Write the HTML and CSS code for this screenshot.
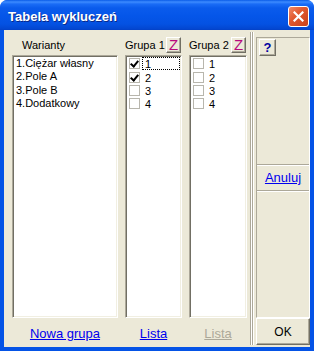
FILE: index.html
```html
<!DOCTYPE html>
<html lang="pl">
<head>
<meta charset="utf-8">
<title>Tabela wykluczeń</title>
<link rel="stylesheet" href="styles.css">
</head>
<body>
<div class="window">
  <div class="titlebar">
    <span class="title">Tabela wykluczeń</span>
    <span class="close">
      <svg width="11" height="11" viewBox="0 0 11 11"><path d="M1.5 1.5 L9.5 9.5 M9.5 1.5 L1.5 9.5" stroke="#fff" stroke-width="2.2" stroke-linecap="square"/></svg>
    </span>
  </div>
  <div class="client">
    <div class="main">
      <div class="col col-var">
        <div class="head head-var"><span class="label">Warianty</span></div>
        <ul class="list">
          <li>1.Ciężar własny</li>
          <li>2.Pole A</li>
          <li>3.Pole B</li>
          <li>4.Dodatkowy</li>
        </ul>
        <div class="foot"><a class="link" href="#">Nowa grupa</a></div>
      </div>
      <div class="col col-g1">
        <div class="head"><span class="label">Grupa 1</span><span class="zbtn">Z</span></div>
        <ul class="list checks">
          <li><span class="cb checked"></span><span class="txt focus">1</span></li>
          <li><span class="cb checked"></span><span class="txt">2</span></li>
          <li><span class="cb"></span><span class="txt">3</span></li>
          <li><span class="cb"></span><span class="txt">4</span></li>
        </ul>
        <div class="foot"><a class="link" href="#">Lista</a></div>
      </div>
      <div class="col col-g2">
        <div class="head"><span class="label">Grupa 2</span><span class="zbtn">Z</span></div>
        <ul class="list checks">
          <li><span class="cb"></span><span class="txt">1</span></li>
          <li><span class="cb"></span><span class="txt">2</span></li>
          <li><span class="cb"></span><span class="txt">3</span></li>
          <li><span class="cb"></span><span class="txt">4</span></li>
        </ul>
        <div class="foot"><span class="link disabled">Lista</span></div>
      </div>
    </div>
    <div class="sep"></div>
    <div class="side">
      <div class="panel">
        <div class="panel-top"><span class="help">?</span></div>
        <div class="cancel"><a class="link" href="#">Anuluj</a></div>
        <div class="panel-bottom"></div>
      </div>
      <div class="ok">OK</div>
    </div>
  </div>
</div>
</body>
</html>
```

FILE: styles.css
```css
html, body {
  margin: 0;
  padding: 0;
  background: #ffffff;
}

body {
  font-family: "Liberation Sans", Arial, sans-serif;
  font-size: 11px;
  color: #000;
}

.window {
  width: 314px;
  height: 351px;
  display: flex;
  flex-direction: column;
  background: #0453e6;
  border-radius: 8px 8px 0 0;
  box-sizing: border-box;
}

.titlebar {
  height: 30px;
  flex: none;
  display: flex;
  align-items: center;
  justify-content: space-between;
  padding: 0 5px 0 8px;
  border-radius: 7px 7px 0 0;
  background: linear-gradient(to bottom,
    #0a5ce8 0px, #3d8bff 2px, #1a6cf6 4px, #0a5bec 8px,
    #0556e9 16px, #0452e2 24px, #0346d0 29px, #0340c4 30px);
}

.title {
  color: #fff;
  font-weight: bold;
  font-size: 13px;
  margin-top: 2px;
  text-shadow: 1px 1px 0 #0a2a8a;
}

.close {
  width: 19px;
  height: 19px;
  margin-top: 2px;
  border: 1px solid #fff;
  border-radius: 3px;
  display: flex;
  align-items: center;
  justify-content: center;
  background: linear-gradient(135deg, #f08a6a 0%, #e25a30 40%, #c8401a 100%);
}

.client {
  flex: 1;
  margin: 0 4px 4px 4px;
  background: #ece9d8;
  display: flex;
}

.main {
  width: 246px;
  display: flex;
  gap: 7px;
  padding-left: 8px;
  box-sizing: border-box;
}

.col {
  display: flex;
  flex-direction: column;
}

.col-var { width: 106px; }
.col-g1 { width: 57px; }
.col-g2 { width: 58px; }

.head {
  height: 25px;
  display: flex;
  align-items: flex-end;
  justify-content: space-between;
  padding-bottom: 2px;
  box-sizing: border-box;
}

.head .label {
  line-height: 13px;
  margin-bottom: 1px;
}

.head-var { padding-left: 10px; }

.zbtn {
  width: 15px;
  height: 16px;
  box-sizing: border-box;
  border: 1px solid;
  border-color: #fff #716f64 #716f64 #fff;
  box-shadow: inset -1px -1px 0 #aca899;
  color: #b8087e;
  font-size: 15px;
  line-height: 14px;
  text-align: center;
  margin-right: 1px;
}

.list {
  list-style: none;
  margin: 0;
  padding: 0 0 0 1px;
  height: 263px;
  box-sizing: border-box;
  background: #fff;
  border: 1px solid;
  border-color: #aca899 #fff #fff #aca899;
  box-shadow: inset 1px 1px 0 #716f64, inset -1px -1px 0 #f1efe2;
  padding-top: 1px;
}

.list li {
  line-height: 13.4px;
  height: 13.4px;
  padding-left: 2px;
  white-space: nowrap;
}

.checks li {
  display: flex;
  align-items: center;
  padding-left: 2px;
}

.cb {
  width: 11px;
  height: 11px;
  box-sizing: border-box;
  border: 1px solid #b8b6ad;
  background: #fff;
  flex: none;
  margin-right: 2px;
  position: relative;
}

.cb.checked::after {
  content: "";
  position: absolute;
  left: 2px;
  top: 0px;
  width: 3px;
  height: 6px;
  border: solid #000;
  border-width: 0 2px 2px 0;
  transform: rotate(40deg);
}

.txt {
  flex: 1;
  height: 13px;
  line-height: 12px;
  padding-left: 2px;
  margin-right: 1px;
  border: 1px dotted transparent;
  box-sizing: border-box;
}

.txt.focus {
  border-color: #000;
}

.foot {
  flex: 1;
  display: flex;
  align-items: center;
  justify-content: center;
  padding-top: 1px;
}

.link {
  font-size: 13px;
  color: #0000ee;
  text-decoration: underline;
}

.link.disabled {
  color: #aca899;
}

.sep {
  width: 4px;
  margin: 2px 0;
  background: linear-gradient(to right, #aca899 0 1px, #fff 1px 2px, #aca899 2px 3px, #fff 3px 4px);
}

.side {
  flex: 1;
  margin-left: 2px;
  display: flex;
  flex-direction: column;
  padding-top: 7px;
  padding-bottom: 2px;
}

.panel {
  flex: 1;
  display: grid;
  grid-template-rows: 1fr auto 1fr;
  border: 1px solid;
  border-color: #aca899 #fff #fff #aca899;
}

.panel-top {
  padding: 1px 0 0 2px;
}

.help {
  display: block;
  width: 17px;
  height: 17px;
  box-sizing: border-box;
  border: 1px solid;
  border-color: #fff #716f64 #716f64 #fff;
  box-shadow: inset -1px -1px 0 #aca899;
  color: #0000a0;
  font-weight: bold;
  font-size: 13px;
  line-height: 15px;
  text-align: center;
}

.cancel {
  height: 25px;
  display: flex;
  align-items: center;
  justify-content: center;
  border-top: 1px solid #aca899;
  border-bottom: 1px solid #aca899;
  box-shadow: inset 0 1px 0 #fff, 0 1px 0 #fff;
}

.ok {
  height: 27px;
  box-sizing: border-box;
  border: 1px solid;
  border-color: #fff #716f64 #716f64 #fff;
  box-shadow: inset -1px -1px 0 #aca899;
  display: flex;
  align-items: center;
  justify-content: center;
  font-size: 12px;
}
```
